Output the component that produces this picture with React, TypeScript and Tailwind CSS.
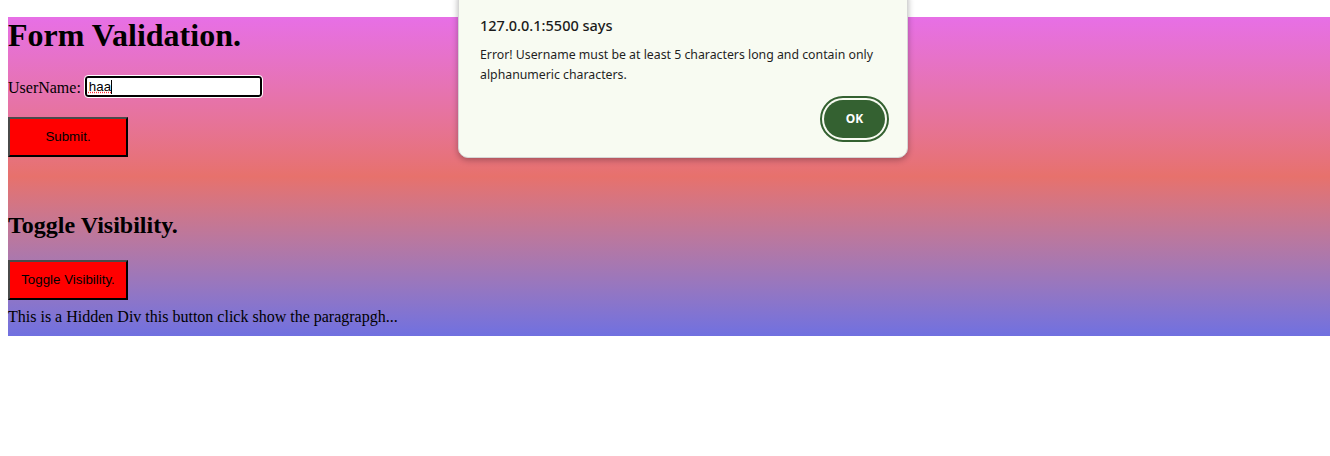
import React from "react";

export default function App() {
  return (
    <div className="relative w-[1330px] h-[456px] bg-white overflow-hidden">
      <div className="pt-[17px] pl-[8px]">
        <div
          className="w-[1322px] h-[319px] bg-gradient-to-b from-[#e76fe6] via-[#e7716c] to-[#7070e0] text-black flex flex-col items-start"
          style={{ fontFamily: '"Liberation Serif", "Times New Roman", serif' }}
        >
          <h1 className="text-[32px] font-bold leading-[37px]">Form Validation.</h1>
          <div className="mt-[22px] flex items-center h-[21px] text-[16px]">
            <span className="leading-[18px] mt-[3px]">UserName:</span>
            <div className="ml-[4px] w-[177px] h-[21px] rounded-[3px] border-2 border-black bg-white outline outline-1 outline-white flex items-center pl-[2px]">
              <span
                className="text-[13.33px] leading-[15px] text-black underline decoration-dotted decoration-red-500"
                style={{ fontFamily: '"Liberation Sans", Arial, sans-serif' }}
              >
                haa
              </span>
              <span className="w-px h-[14px] bg-black"></span>
            </div>
          </div>
          <button
            className="mt-[20px] w-[120px] h-[40px] bg-[#ff0000] border-2 border-t-[#4a4a4a] border-l-[#4a4a4a] border-r-black border-b-black text-[13.33px] text-black"
            style={{ fontFamily: '"Liberation Sans", Arial, sans-serif' }}
          >
            Submit.
          </button>
          <h2 className="mt-[54px] text-[24px] font-bold leading-[28px]">Toggle Visibility.</h2>
          <button
            className="mt-[21px] w-[120px] h-[40px] bg-[#ff0000] border-2 border-t-[#4a4a4a] border-l-[#4a4a4a] border-r-black border-b-black text-[13.33px] text-black"
            style={{ fontFamily: '"Liberation Sans", Arial, sans-serif' }}
          >
            Toggle Visibility.
          </button>
          <p className="mt-[8px] text-[16px] leading-[18px]">This is a Hidden Div this button click show the paragrapgh...</p>
        </div>
      </div>

      <div
        className="absolute left-[458px] top-[-12px] w-[450px] h-[170px] bg-[#f8fbf2] rounded-[10px] border border-[#d6d6d6] shadow-[0_2px_6px_rgba(0,0,0,0.3)] pt-[26px] px-[21px]"
        style={{ fontFamily: '"Noto Sans", "Open Sans", sans-serif' }}
      >
        <div className="text-[14.5px] leading-[20px] text-[#1b1b1b] font-medium">127.0.0.1:5500 says</div>
        <div className="mt-[10px] text-[12.3px] leading-[20px] text-[#1f1f1f]">
          Error! Username must be at least 5 characters long and contain only
          <br />
          alphanumeric characters.
        </div>
        <div className="flex justify-end mt-[11px]">
          <div className="w-[69px] h-[46px] rounded-full border-2 border-[#346131] p-[2px] mr-[-3px]">
            <button className="w-full h-full rounded-full bg-[#346131] text-white text-[12px] font-bold">OK</button>
          </div>
        </div>
      </div>
    </div>
  );
}
